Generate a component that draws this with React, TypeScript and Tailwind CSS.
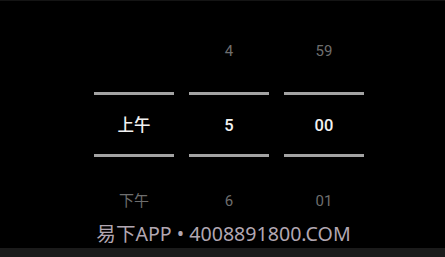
import React from "react";

const cols = [
  { up: "", mid: "上午", down: "下午" },
  { up: "4", mid: "5", down: "6" },
  { up: "59", mid: "00", down: "01" },
];

export default function App() {
  return (
    <div
      className="relative w-[445px] h-[257px] bg-black flex flex-col overflow-hidden"
      style={{ fontFamily: 'Roboto, "Noto Sans CJK SC", sans-serif' }}
    >
      <div className="h-[1px] bg-[#141414]" />
      <div className="flex-1 flex justify-center gap-[15px] pl-[13px]">
        {cols.map((c, i) => (
          <div key={i} className="w-[80px] flex flex-col items-center">
            <div className="mt-[38px] h-[24px] leading-[24px] text-[15px] text-[#6e6e6e]">{c.up}</div>
            <div className="mt-[29px] h-[3px] w-full bg-[#a3a3a3]" />
            <div className="h-[59px] pt-[3px] flex items-center justify-center text-[16.5px] font-medium text-[#f2f2f2]">{c.mid}</div>
            <div className="h-[3px] w-full bg-[#a3a3a3]" />
            <div className="mt-[32px] h-[24px] leading-[24px] text-[15px] text-[#6e6e6e]">{c.down}</div>
          </div>
        ))}
      </div>
      <div className="h-[9px] bg-[#1b1b1b]" />
      <div
        className="absolute left-[2px] right-0 top-[221px] h-[26px] flex items-center justify-center text-[19.6px] text-[#b2a7b2]"
        style={{ fontFamily: '"Noto Sans", "Noto Sans CJK SC", sans-serif' }}
      >
        易下APP • 4008891800.COM
      </div>
    </div>
  );
}
